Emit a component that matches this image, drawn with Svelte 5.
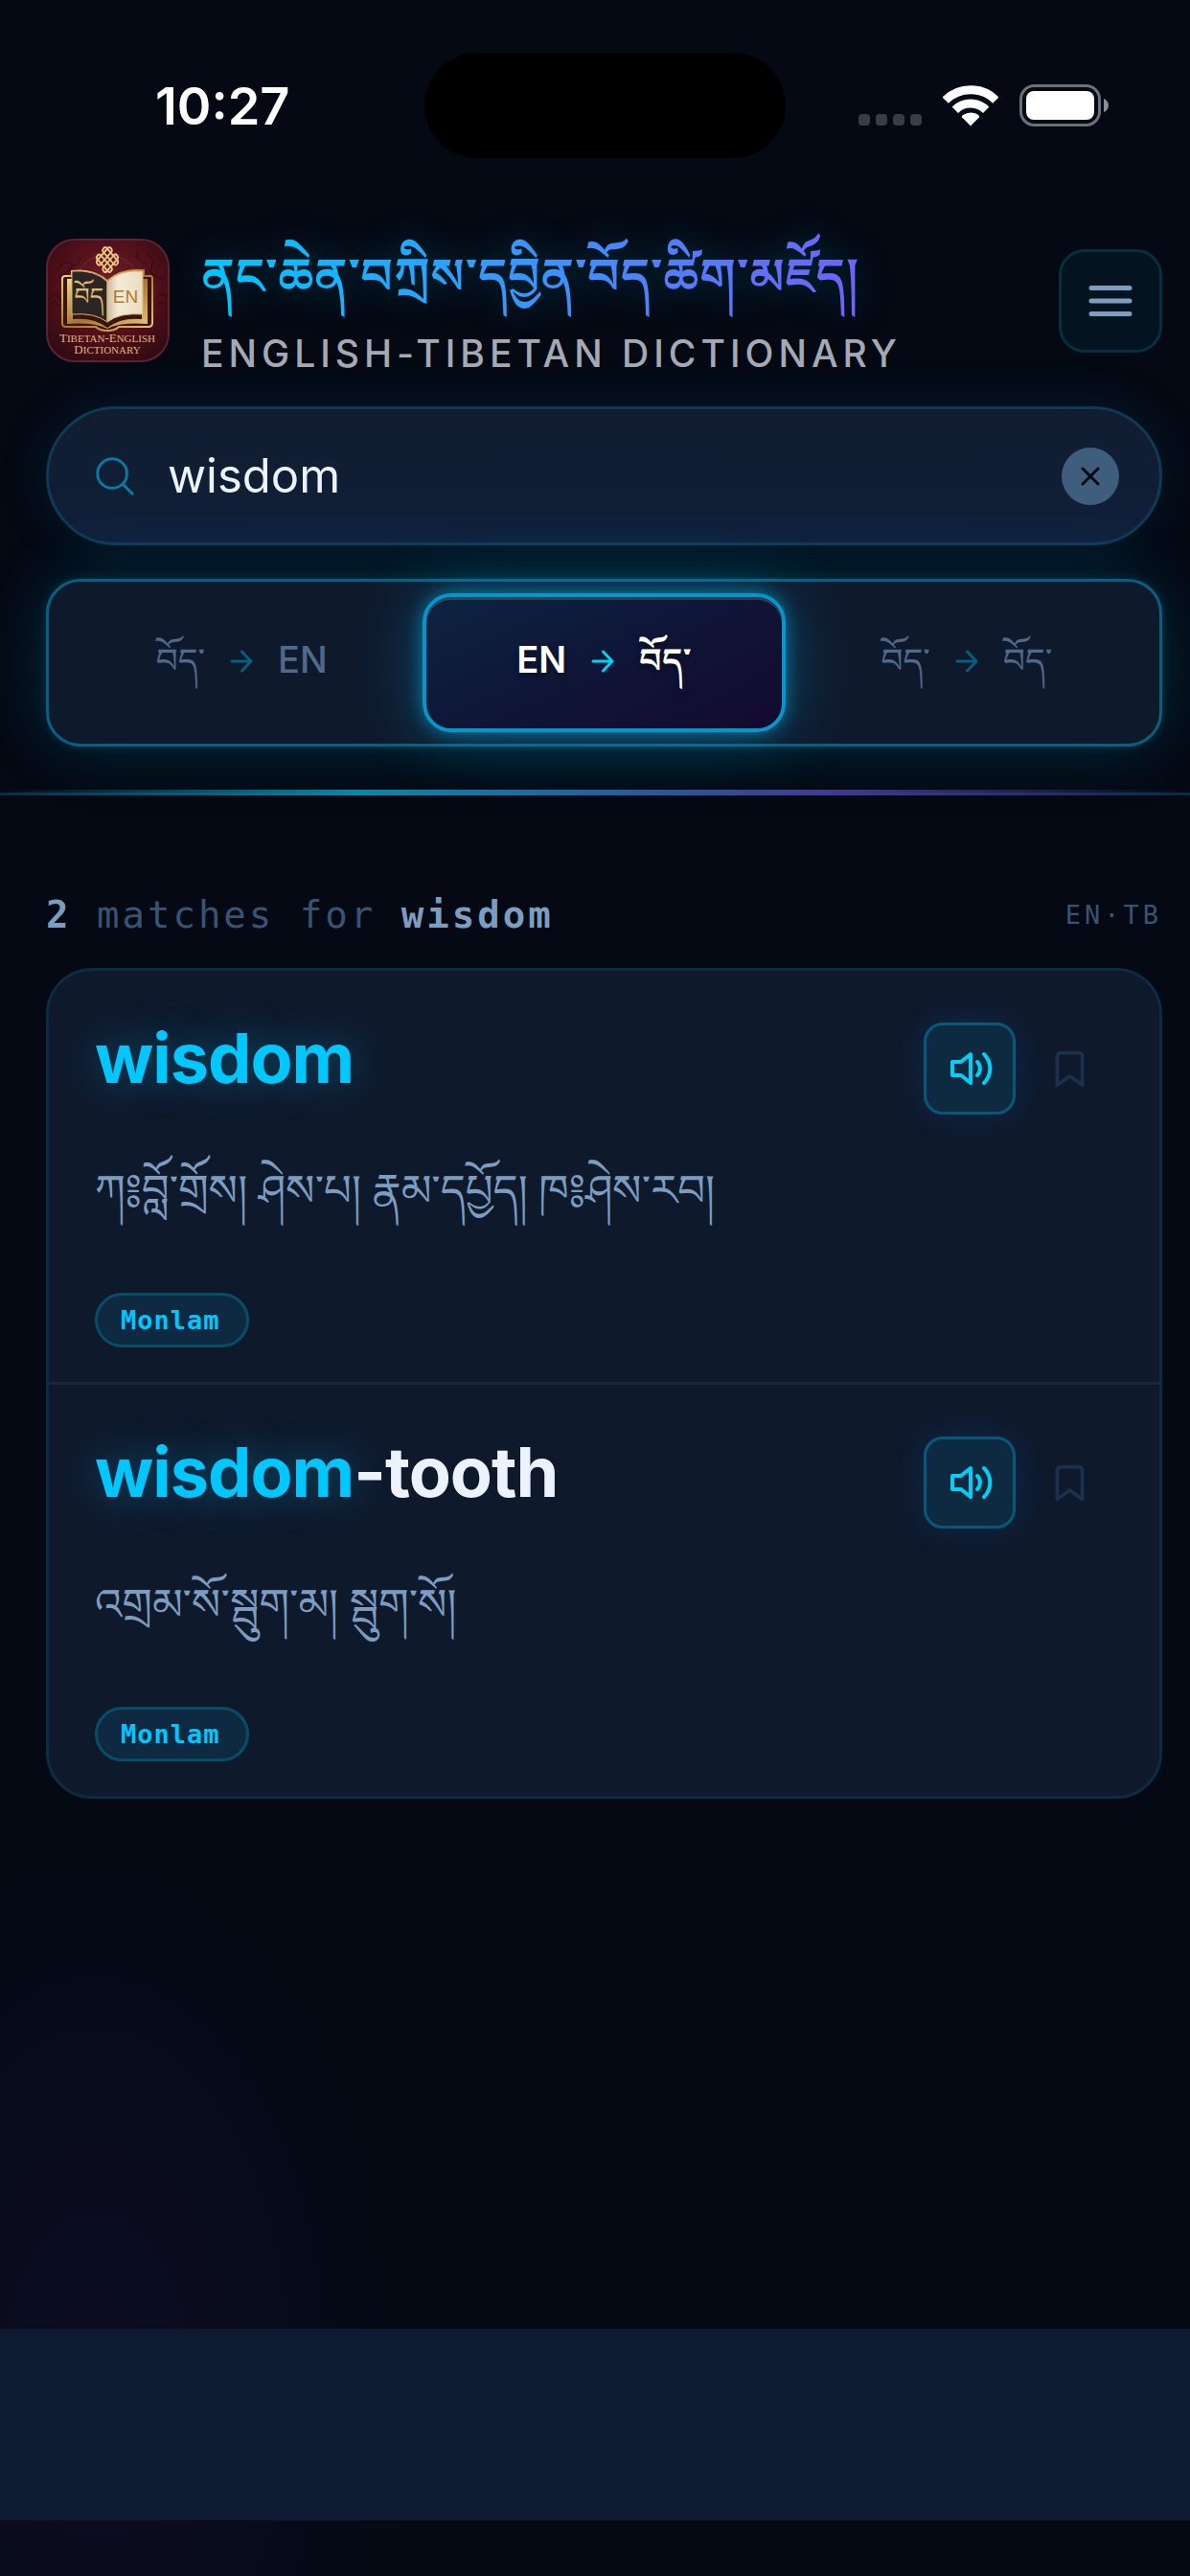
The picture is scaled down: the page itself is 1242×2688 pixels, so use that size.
<script lang="ts">
  type Part = { kind: 'tib' | 'lat' | 'arrow'; text?: string };

  interface Entry {
    id: number;
    match: string;
    rest: string;
    definition: string;
    source: string;
  }

  const modes: { id: string; label: string; parts: Part[] }[] = [
    { id: 'tb-en', label: 'Tibetan to English', parts: [{ kind: 'tib', text: 'བོད་' }, { kind: 'arrow' }, { kind: 'lat', text: 'EN' }] },
    { id: 'en-tb', label: 'English to Tibetan', parts: [{ kind: 'lat', text: 'EN' }, { kind: 'arrow' }, { kind: 'tib', text: 'བོད་' }] },
    { id: 'tb-tb', label: 'Tibetan to Tibetan', parts: [{ kind: 'tib', text: 'བོད་' }, { kind: 'arrow' }, { kind: 'tib', text: 'བོད་' }] }
  ];

  const entries: Entry[] = [
    { id: 1, match: 'wisdom', rest: '', definition: 'ཀ༔བློ་གྲོས། ཤེས་པ། རྣམ་དཔྱོད། ཁ༔ཤེས་རབ།', source: 'Monlam' },
    { id: 2, match: 'wisdom', rest: '-tooth', definition: 'འགྲམ་སོ་སྦུག་མ། སྦུག་སོ།', source: 'Monlam' }
  ];

  let query = $state('wisdom');
  let mode = $state('en-tb');
  let saved = $state<number[]>([]);

  const results = $derived(
    entries.filter((e) => query !== '' && (e.match + e.rest).includes(query.toLowerCase()))
  );

  function toggleSaved(id: number) {
    saved = saved.includes(id) ? saved.filter((s) => s !== id) : [...saved, id];
  }
</script>

<div class="app">
  <div class="status-bar">
    <span class="time">10:27</span>
    <span class="island"></span>
    <div class="indicators">
      <svg width="66" height="13" viewBox="0 0 66 13" fill="#383d47" aria-hidden="true">
        <rect width="12" height="12" rx="4" />
        <rect x="18" width="12" height="12" rx="4" />
        <rect x="36" width="12" height="12" rx="4" />
        <rect x="54" width="12" height="12" rx="4" />
      </svg>
      <svg width="58" height="43" viewBox="0 0 58 43" aria-hidden="true">
        <g fill="none" stroke="#fff" stroke-width="9">
          <path d="M2.700 15.600A37.300 37.300 0 0 1 55.300 15.600" />
          <path d="M12.800 25.700A23 23 0 0 1 45.200 25.700" />
        </g>
        <path d="M29 42.500L20 33.200Q19.500 32 21 31Q29 26 37 31Q38.500 32 38 33.200z" fill="#fff" />
      </svg>
      <svg width="94" height="44" viewBox="0 0 94 44" aria-hidden="true">
        <rect x="1.500" y="1.500" width="82" height="41" rx="14" fill="none" stroke="#6b6f77" stroke-width="3" />
        <rect x="7" y="7" width="71" height="30" rx="8" fill="#fff" />
        <path d="M88 15c3 1 5 4 5 7s-2 6-5 7z" fill="#8a8d94" />
      </svg>
    </div>
  </div>

  <header>
    <div class="brand">
      <svg class="logo" width="129" height="129" viewBox="0 0 129 129" role="img" aria-label="Tibetan-English Dictionary">
        <defs>
          <radialGradient id="maroon" cx="50%" cy="40%" r="70%">
            <stop offset="0" stop-color="#74202a" />
            <stop offset="0.6" stop-color="#4f0f19" />
            <stop offset="1" stop-color="#2e0a12" />
          </radialGradient>
          <linearGradient id="gold" x1="0" y1="0" x2="1" y2="1">
            <stop offset="0" stop-color="#f3d68b" />
            <stop offset="0.5" stop-color="#a87530" />
            <stop offset="1" stop-color="#ecc878" />
          </linearGradient>
          <linearGradient id="paper" x1="0" y1="0" x2="1" y2="0">
            <stop offset="0" stop-color="#cdbb9c" />
            <stop offset="0.3" stop-color="#f4ead6" />
            <stop offset="1" stop-color="#eadcc2" />
          </linearGradient>
        </defs>
        <rect x="1" y="1" width="127" height="127" rx="29" fill="url(#maroon)" stroke="#5c2430" stroke-width="2" />
        <g fill="none" stroke="#2b0a10" stroke-width="1.500" opacity="0.600">
          <path d="M12 34q6-14 14-8t10-8M14 40q9-4 14-12M106 16q8 6 4 14t12 12M96 12q-4 10 8 14" />
          <path d="M4 62q5-8 10 0t10 0M4 70q5-8 10 0M126 62q-5-8-10 0M126 70q-5-8-10 0M10 104q8-10 14 0t10-2M118 104q-8-10-14 0" />
        </g>
        <circle cx="64" cy="52" r="35" fill="none" stroke="#8a3a2c" stroke-width="1" opacity="0.600" />
        <!-- endless knot -->
        <g fill="none" stroke="#e8c880" stroke-width="1.800" transform="translate(64 22) scale(1 1.150) rotate(45)">
          <rect x="-10" y="-7" width="20" height="5" rx="2" />
          <rect x="-10" y="2" width="20" height="5" rx="2" />
          <rect x="-7" y="-10" width="5" height="20" rx="2" />
          <rect x="2" y="-10" width="5" height="20" rx="2" />
        </g>
        <path d="M17 42q0-3 3-3h7v-5q22-3 37 10 15-13 38-11v6h7q2 0 2 3v46q0 4-4 4H76q-4 4-12 4t-12-4H21q-4 0-4-4z" fill="#3a1410" stroke="url(#gold)" stroke-width="2" />
        <path d="M22 42h6v42q22-2 36 9 14-11 36-9V42h6v47q-28-2-42 5-14-7-42-5z" fill="url(#gold)" />
        <path d="M27 34q24-2 37 11v42q-13-10-37-8z" fill="#2b2526" stroke="#d9b468" stroke-width="1" />
        <path d="M101 34q-24-2-37 11v42q13-10 37-8z" fill="url(#paper)" stroke="#d9b468" stroke-width="1" />
        <text class="logo-tib" x="45" y="69" text-anchor="middle">བོད</text>
        <text class="logo-en" x="83" y="67" text-anchor="middle">EN</text>
        <text class="logo-name" x="64" y="108" text-anchor="middle">T<tspan class="sc">IBETAN</tspan>-E<tspan class="sc">NGLISH</tspan></text>
        <text class="logo-name" x="64" y="120" text-anchor="middle">D<tspan class="sc">ICTIONARY</tspan></text>
      </svg>
      <div class="titles">
        <h1 lang="bo">ནང་ཆེན་བཀྲིས་དབྱིན་བོད་ཚིག་མཛོད།</h1>
        <p>ENGLISH-TIBETAN DICTIONARY</p>
      </div>
      <button class="menu" aria-label="Open menu">
        <svg width="60" height="60" viewBox="0 0 24 24" fill="none" stroke="currentColor" stroke-width="2" stroke-linecap="round">
          <path d="M4 6.600h16M4 12h16M4 17.400h16" />
        </svg>
      </button>
    </div>

    <div class="search">
      <svg width="46" height="46" viewBox="0 0 24 24" fill="none" stroke="#087ba0" stroke-width="1.500" stroke-linecap="round" aria-hidden="true">
        <circle cx="10.500" cy="10.500" r="8" />
        <path d="M16.500 16.500L21.500 21.500" />
      </svg>
      <input type="text" bind:value={query} aria-label="Search the dictionary" />
      <button class="clear" aria-label="Clear search" onclick={() => (query = '')}>
        <svg width="20" height="20" viewBox="0 0 20 20" fill="none" stroke="#04080f" stroke-width="3" stroke-linecap="round">
          <path d="M2 2l16 16M18 2L2 18" />
        </svg>
      </button>
    </div>

    <div class="modes">
      {#each modes as m (m.id)}
        <button class="mode" class:active={mode === m.id} aria-label={m.label} aria-pressed={mode === m.id} onclick={() => (mode = m.id)}>
          <span class="pair">
            {#each m.parts as part}
              {#if part.kind === 'arrow'}
                <svg class="arrow" width="24" height="24" viewBox="0 0 24 24" fill="none" stroke="currentColor" stroke-width="3" stroke-linecap="round" stroke-linejoin="round">
                  <path d="M2 12h20M12.500 2l9.500 10-9.500 10" />
                </svg>
              {:else}
                <span class={part.kind}>{part.text}</span>
              {/if}
            {/each}
          </span>
        </button>
      {/each}
    </div>
  </header>

  <main>
    <div class="summary">
      <p class="count"><strong>{results.length}</strong> matches for <strong>{query}</strong></p>
      <span class="direction">EN·TB</span>
    </div>

    <div class="results">
      {#each results as entry (entry.id)}
        <article class="entry">
          <div class="entry-head">
            <h2><mark>{entry.match}</mark>{entry.rest}</h2>
            <button class="speak" aria-label="Listen to {entry.match}{entry.rest}">
              <svg width="48" height="48" viewBox="0 0 24 24" fill="none" stroke="currentColor" stroke-width="2" stroke-linecap="round" stroke-linejoin="round">
                <path d="M12.500 4.500L7.500 8.500H3v7h4.500l5 4z" />
                <path d="M16 8.500a5 5 0 0 1 0 7M19.500 4.500a10.500 10.500 0 0 1 0 15" />
              </svg>
            </button>
            <button class="save" class:saved={saved.includes(entry.id)} aria-label="Save {entry.match}{entry.rest}" onclick={() => toggleSaved(entry.id)}>
              <svg width="45" height="45" viewBox="0 0 24 24" fill="none" stroke="currentColor" stroke-width="2" stroke-linecap="round" stroke-linejoin="round">
                <path d="M19 21l-7-5-7 5V5a2 2 0 0 1 2-2h10a2 2 0 0 1 2 2z" />
              </svg>
            </button>
          </div>
          <p class="definition" lang="bo">{entry.definition}</p>
          <span class="source">{entry.source}</span>
        </article>
      {/each}
    </div>
  </main>

  <footer></footer>
</div>

<style>
  :global(body) {
    margin: 0;
    background: #040913;
  }

  .app {
    --accent: #00c8ff;
    --card: #0f192c;
    --muted: #7d9dc0;
    --dim: #385474;
    --tibetan: 'Noto Serif Tibetan', 'Noto Sans Tibetan', 'Microsoft Himalaya', 'Jomolhari', 'DejaVu Sans', serif;
    display: flex;
    flex-direction: column;
    min-height: 100vh;
    box-sizing: border-box;
    padding-bottom: 58px;
    background:
      radial-gradient(340px 600px at 100px 2480px, rgba(100, 60, 200, 0.09), transparent),
      #040913;
    color: #edf2ff;
    font-family: Inter, 'Liberation Sans', sans-serif;
  }

  button {
    display: flex;
    align-items: center;
    justify-content: center;
    box-sizing: border-box;
    padding: 0;
    border: none;
    background: none;
    color: inherit;
    font-family: inherit;
    cursor: pointer;
  }

  h1,
  h2,
  p {
    margin: 0;
  }

  .status-bar {
    display: grid;
    grid-template-columns: 1fr 377px 1fr;
    align-items: center;
    height: 110px;
    padding: 55px 0 0 20px;
    color: #fff;
  }

  .time {
    justify-self: center;
    padding: 2px 0 0 2px;
    font-size: 54px;
    font-weight: 600;
    line-height: 60px;
  }

  .island {
    height: 110px;
    border-radius: 55px;
    background: #000;
  }

  .indicators {
    display: flex;
    align-items: flex-end;
    justify-content: flex-end;
    gap: 22px;
    padding-right: 84px;
  }

  header {
    display: flex;
    flex-direction: column;
    padding: 73px 29px 48px 48px;
    border-bottom: 3px solid #0c2c42;
    position: relative;
  }

  /* accent line over the lower border */
  header::after {
    content: '';
    position: absolute;
    left: 0;
    right: 0;
    bottom: -3px;
    height: 6px;
    background: linear-gradient(90deg, transparent, #0788a8 30%, #403a90 70%, transparent);
  }

  .brand {
    display: flex;
    align-items: center;
    gap: 33px;
  }

  .logo {
    flex-shrink: 0;
  }

  .logo-tib {
    fill: #e3bd6d;
    font-family: var(--tibetan);
    font-size: 25px;
  }

  .logo-en {
    fill: #b07a2c;
    font-family: 'Liberation Sans', sans-serif;
    font-size: 19px;
  }

  .logo-name {
    fill: #e0b47c;
    font-family: 'Liberation Serif', serif;
    font-size: 13px;
  }

  .sc {
    font-size: 11px;
  }

  .titles {
    flex: 1;
  }

  h1 {
    width: fit-content;
    padding-top: 20px;
    background: linear-gradient(90deg, #00c8ff, #7062f5);
    background-clip: text;
    color: transparent;
    filter: drop-shadow(0 0 18px rgba(0, 200, 255, 0.25));
    font-family: var(--tibetan);
    font-size: 52px;
    font-weight: 600;
    line-height: 91px;
    white-space: nowrap;
  }

  .titles p {
    color: #a5a9b5;
    font-size: 39px;
    font-weight: 500;
    letter-spacing: 5px;
    line-height: 40px;
    white-space: nowrap;
  }

  .menu {
    width: 108px;
    height: 108px;
    border: 3px solid #04303f;
    border-radius: 27px;
    background: #031420;
    color: var(--muted);
  }

  .search {
    display: flex;
    align-items: center;
    gap: 32px;
    height: 139px;
    margin-top: 35px;
    padding: 0 42px 0 46px;
    border: 3px solid #0d3b55;
    border-radius: 73px;
    background: linear-gradient(180deg, #111c2f, #10203a);
    box-shadow: 0 0 60px rgba(0, 200, 255, 0.1);
  }

  .search input {
    flex: 1;
    min-width: 0;
    padding: 0;
    border: none;
    outline: none;
    background: none;
    color: #edf2ff;
    font-family: inherit;
    font-size: 49px;
    line-height: 62px;
  }

  .clear {
    width: 60px;
    height: 60px;
    border-radius: 50%;
    background: #3f5d7c;
  }

  .modes {
    display: flex;
    margin-top: 35px;
    padding: 12px;
    border: 3px solid #07607f;
    border-radius: 36px;
    background: #0f192c;
    box-shadow:
      0 0 12px rgba(0, 200, 255, 0.14),
      0 0 72px rgba(0, 200, 255, 0.18);
  }

  .mode {
    flex: 1;
    height: 145px;
    border: 4px solid transparent;
    border-radius: 30px;
    color: #516a8a;
    font-size: 38px;
    font-weight: 500;
  }

  .pair {
    display: flex;
    align-items: baseline;
    gap: 26px;
    padding-top: 16px;
  }

  .lat {
    line-height: 20px;
  }

  .tib {
    font-family: var(--tibetan);
    font-size: 36px;
    font-weight: 400;
    line-height: 44px;
  }

  .arrow {
    color: #075f7c;
  }

  .mode.active {
    border-color: #0298cb;
    background: linear-gradient(155deg, #0d2440, #0f1738 45%, #130a2e);
    box-shadow:
      0 0 18px rgba(0, 200, 255, 0.5),
      0 0 72px rgba(0, 200, 255, 0.3),
      inset 0 3px 0 rgba(255, 255, 255, 0.15);
    color: #fff;
    font-weight: 600;
    text-shadow: 0 3px 6px rgba(0, 0, 0, 0.5);
  }

  .active .tib {
    font-weight: 600;
  }

  .active .arrow {
    color: #00d4f5;
  }

  main {
    flex: 1;
    padding: 90px 29px 0 48px;
  }

  .summary {
    display: flex;
    align-items: center;
    justify-content: space-between;
    height: 68px;
    margin-bottom: 22px;
    color: var(--dim);
    font-family: 'DejaVu Sans Mono', monospace;
  }

  .count {
    font-size: 39px;
    letter-spacing: 3px;
  }

  .count strong {
    color: var(--muted);
  }

  .direction {
    font-size: 27px;
    letter-spacing: 4px;
  }

  .results {
    overflow: hidden;
    border: 3px solid #0d2b43;
    border-radius: 48px;
    background: var(--card);
  }

  .entry {
    padding: 54px 46px 36px 48px;
  }

  .entry + .entry {
    border-top: 3px solid #1b2638;
  }

  .entry-head {
    display: flex;
    align-items: center;
    gap: 8px;
  }

  h2 {
    flex: 1;
    padding-bottom: 22px;
    font-size: 72px;
    font-weight: 700;
    letter-spacing: -1px;
    line-height: 72px;
  }

  mark {
    background: none;
    color: var(--accent);
    text-shadow: 0 0 42px rgba(0, 200, 255, 0.35);
  }

  .speak,
  .save {
    width: 96px;
    height: 96px;
  }

  .speak {
    border: 3px solid #0a5877;
    border-radius: 20px;
    background: #0e2a41;
    box-shadow: 0 0 30px rgba(0, 140, 255, 0.15);
    color: #00d0f5;
  }

  .save {
    color: #1c304b;
  }

  .save.saved {
    color: var(--accent);
  }

  .definition {
    margin-top: 42px;
    color: var(--muted);
    font-family: var(--tibetan);
    font-size: 45px;
    line-height: 102px;
    white-space: nowrap;
  }

  .source {
    display: block;
    width: fit-content;
    margin-top: 42px;
    padding: 0 27px 0 24px;
    border: 3px solid #0a4c66;
    border-radius: 29px;
    background: #0e2a41;
    color: var(--accent);
    font-family: 'DejaVu Sans Mono', monospace;
    font-size: 27px;
    font-weight: 700;
    letter-spacing: 1px;
    line-height: 51px;
  }

  footer {
    height: 200px;
    background: #0e1a31;
  }
</style>
